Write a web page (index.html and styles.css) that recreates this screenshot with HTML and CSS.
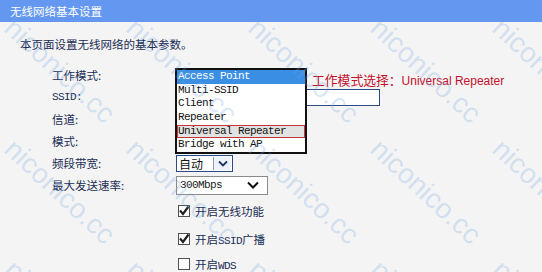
FILE: index.html
```html
<html>
  <head>
    <meta charset="utf-8"/>
    <title>无线网络基本设置</title>
    <link rel="stylesheet" href="styles.css">
  </head>
  <body>

    <div class="titlebar">无线网络基本设置</div>

    <div class="intro">本页面设置无线网络的基本参数。</div>

    <div class="form">
      <div class="label">工作模式:</div>
      <div class="field field-mode">
        <div class="mode-select"></div>
        <span class="note">工作模式选择：<span class="note-en">Universal Repeater</span></span>
        <ul class="popup">
          <li class="selected">Access Point</li>
          <li>Multi-SSID</li>
          <li>Client</li>
          <li>Repeater</li>
          <li class="marked">Universal Repeater</li>
          <li>Bridge with AP</li>
        </ul>
      </div>

      <div class="label"><span class="en">SSID:</span></div>
      <div class="field"><div class="textbox"></div></div>

      <div class="label">信道:</div>
      <div class="field"></div>

      <div class="label">模式:</div>
      <div class="field"></div>

      <div class="label">频段带宽:</div>
      <div class="field">
        <div class="select-small">
          <span>自动</span>
          <span class="arrow-box">
            <svg width="10" height="7" viewBox="0 0 10 7"><path d="M1 1.5 L5 5.5 L9 1.5" fill="none" stroke="#1f3566" stroke-width="1.8"/></svg>
          </span>
        </div>
      </div>

      <div class="label">最大发送速率:</div>
      <div class="field">
        <div class="select-rate">
          <span class="en">300Mbps</span>
          <svg width="12" height="8" viewBox="0 0 12 8"><path d="M1 1.5 L6 6.5 L11 1.5" fill="none" stroke="#111" stroke-width="2"/></svg>
        </div>
      </div>

      <div class="field check-row">
        <span class="box"><svg width="12" height="12" viewBox="0 0 12 12"><path d="M2 5.5 L5 9 L10.5 1.5" fill="none" stroke="#222" stroke-width="2.2"/></svg></span>
        <span>开启无线功能</span>
      </div>
      <div class="field check-row">
        <span class="box"><svg width="12" height="12" viewBox="0 0 12 12"><path d="M2 5.5 L5 9 L10.5 1.5" fill="none" stroke="#222" stroke-width="2.2"/></svg></span>
        <span>开启<span class="en">SSID</span>广播</span>
      </div>
      <div class="field check-row">
        <span class="box"></span>
        <span>开启<span class="en">WDS</span></span>
      </div>
    </div>

    <div class="watermarks">
      <span>niconico.cc</span><span>niconico.cc</span><span>niconico.cc</span><span>niconico.cc</span><span>niconico.cc</span>
      <span>niconico.cc</span><span>niconico.cc</span><span>niconico.cc</span><span>niconico.cc</span><span>niconico.cc</span>
      <span>niconico.cc</span><span>niconico.cc</span><span>niconico.cc</span><span>niconico.cc</span><span>niconico.cc</span>
    </div>

  </body>
</html>
```

FILE: styles.css
```css
/* wireless basic settings page */

body
{
margin: 0;
height: 272px;
position: relative;
overflow: hidden;
background-color: #F4F4F4;
font-family: "Noto Sans CJK SC", sans-serif;
font-size: 11.5px;
color: #1A2D55;
}

.en
{
font-family: "Liberation Mono", monospace;
font-size: 11px;
letter-spacing: -0.6px;
}

.titlebar
{
height: 22px;
line-height: 22px;
padding-left: 10px;
background-color: #6498F0;
color: #FFFFFF;
font-size: 11.5px;
}

.intro
{
margin: 14px 0px 0px 20px;
line-height: 16px;
}

.form
{
margin-top: 12px;
padding-left: 52px;
display: grid;
grid-template-columns: 124px 1fr;
grid-template-rows: repeat(6, 22px) 30px 26px 24px;
}

.label
{
display: flex;
align-items: center;
}

.field
{
display: flex;
align-items: center;
}

.field-mode
{
position: relative;
align-items: flex-start;
}

.mode-select
{
width: 131px;
height: 17px;
}

.note
{
margin-left: 5px;
padding-top: 8px;
line-height: 16px;
color: #C4102A;
font-size: 12.8px;
}

.note-en
{
font-family: "Liberation Sans", sans-serif;
font-size: 12px;
}

.popup
{
position: absolute;
left: -1px;
top: 4px;
z-index: 2;
width: 128px;
margin: 0px;
padding: 0px;
list-style: none;
border: 2px solid #111111;
background-color: #FFFFFF;
}

.popup li
{
height: 13.66px;
line-height: 13.66px;
padding-left: 1px;
font-family: "Liberation Mono", monospace;
font-size: 11px;
letter-spacing: -0.6px;
color: #111111;
white-space: nowrap;
}

.popup li.selected
{
background-color: #3A8FE4;
color: #FFFFFF;
}

.popup li.marked
{
background-color: #E2E2E2;
box-shadow: inset 0px 0px 0px 1px #C4343A;
}

.textbox
{
width: 202px;
height: 15px;
border: 1px solid #2C4A86;
background-color: #FFFFFF;
}

.select-small
{
display: flex;
align-items: center;
justify-content: space-between;
width: 53px;
height: 15px;
padding-left: 2px;
border: 1px solid #2C4A86;
background-color: #FFFFFF;
color: #111111;
font-size: 12px;
}

.arrow-box
{
display: flex;
align-items: center;
justify-content: center;
width: 17px;
height: 13px;
margin-right: 1px;
border-left: 1px solid #8A9AB8;
background-color: #EEF2FA;
}

.select-rate
{
display: flex;
align-items: center;
justify-content: space-between;
width: 79px;
height: 17px;
padding: 0px 8px 0px 3px;
border: 1px solid #8A8A8A;
background-color: #FFFFFF;
color: #222222;
}

.check-row
{
grid-column: 2;
gap: 5px;
padding-left: 2px;
}

.box
{
display: flex;
width: 12px;
height: 12px;
border: 1px solid #505050;
background-color: #FFFFFF;
box-sizing: border-box;
}

.box svg
{
margin: -1px;
}

.watermarks
{
position: absolute;
left: -1px;
top: 10px;
z-index: 3;
display: grid;
grid-template-columns: repeat(5, 122px);
grid-auto-rows: 121px;
pointer-events: none;
}

.watermarks span
{
display: flex;
align-items: center;
justify-content: center;
transform: rotate(43deg);
font-family: "Liberation Sans", sans-serif;
font-size: 28px;
color: rgba(110, 160, 225, 0.26);
white-space: nowrap;
}
```
